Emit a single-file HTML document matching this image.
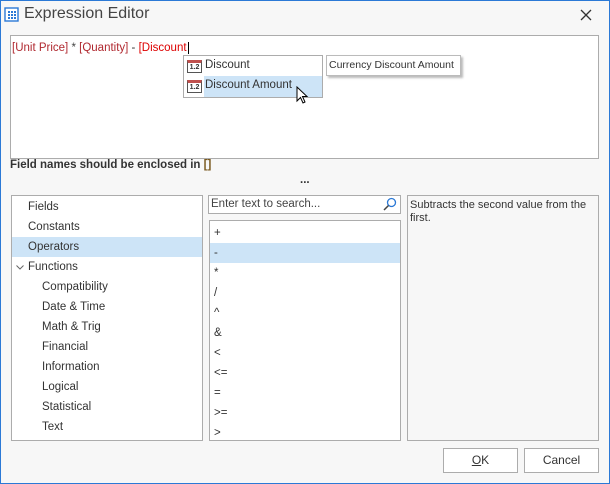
<!DOCTYPE html>
<html><head><style>
*{margin:0;padding:0;box-sizing:border-box}
body{width:610px;height:484px;background:#f7f7f7;font-family:"Liberation Sans",sans-serif;font-size:11.5px;color:#333;position:relative;overflow:hidden}
.a{position:absolute}
.box{position:absolute;background:#fff;border:1px solid #acacac}
.it{position:absolute;left:0;right:0;height:20px;line-height:20px}
.sel{background:#cde4f7}
.btn{position:absolute;background:#fff;border:1px solid #acacac;text-align:center;line-height:23px;font-size:12px}
.ic{position:absolute;width:15px;height:13px;border:1px solid #555;border-top:3px solid #c0504d;font-size:7px;line-height:9px;text-align:center;font-weight:bold;background:#fff}
</style></head><body>
<div class="a" style="left:0;top:0;width:610px;height:484px;border:1px solid #2b79d6"></div>
<svg class="a" style="left:4px;top:7px" width="15" height="15"><rect x="1" y="1" width="13" height="13" fill="#fff" stroke="#2b79d6" stroke-width="1.4"/><g fill="#2b79d6"><rect x="4" y="4" width="2" height="2"/><rect x="7" y="4" width="2" height="2"/><rect x="10" y="4" width="2" height="2"/><rect x="4" y="7" width="2" height="2"/><rect x="7" y="7" width="2" height="2"/><rect x="10" y="7" width="2" height="2"/><rect x="4" y="10" width="2" height="2"/><rect x="7" y="10" width="2" height="2"/><rect x="10" y="10" width="2" height="2"/></g></svg>
<div class="a" style="left:24px;top:5px;font-size:16px;color:#444">Expression Editor</div>
<svg class="a" style="left:580px;top:9px" width="12" height="12"><path d="M1 1L11 11M11 1L1 11" stroke="#333" stroke-width="1.3"/></svg>
<div class="box" style="left:10px;top:35px;width:589px;height:124px"></div>
<div class="a" style="left:12px;top:42px;font-size:11.5px"><span style="color:#b0282f">[Unit Price]</span> <span style="color:#444">*</span> <span style="color:#b0282f">[Quantity]</span> - <span style="color:#d00">[Discount</span><span style="border-left:1px solid #000;margin-left:1px"></span></div>
<div class="a" style="left:183px;top:55px;width:140px;height:43px;background:#fff;border:1px solid #acacac">
<div class="ic" style="left:3px;top:4px">1.2</div><div class="a" style="left:21px;top:3px">Discount</div>
<div class="a sel" style="left:20px;top:20px;width:118px;height:21px"></div>
<div class="ic" style="left:3px;top:24px">1.2</div><div class="a" style="left:21px;top:23px">Discount Amount</div>
</div>
<svg class="a" style="left:296px;top:86px" width="14" height="20"><path d="M1 1L1 15L4.5 11.5L7 17L9 16L6.5 10.5L11 10.5Z" fill="#fff" stroke="#000"/></svg>
<div class="a" style="left:326px;top:55px;width:135px;height:21px;background:#fff;border:1px solid #bbb;box-shadow:2px 2px 2px #bbb;padding:3px 2px;font-size:10.5px;white-space:nowrap;overflow:hidden">Currency Discount Amount</div>
<div class="a" style="left:10px;top:159px;font-weight:bold;font-size:11.5px;color:#333">Field names should be enclosed in <span style="color:#7a5a20">[]</span></div>
<div class="a" style="left:300px;top:174px;font-weight:bold">...</div>
<div class="box" style="left:11px;top:195px;width:192px;height:246px">
<div class="it" style="top:1px;padding-left:16px">Fields</div>
<div class="it" style="top:21px;padding-left:16px">Constants</div>
<div class="it sel" style="top:41px;padding-left:16px">Operators</div>
<div class="it" style="top:61px;padding-left:16px">Functions</div>
<svg class="a" style="left:4px;top:69px" width="8" height="6"><path d="M0.5 0.5L4 4L7.5 0.5" stroke="#666" fill="none"/></svg>
<div class="it" style="top:81px;padding-left:30px">Compatibility</div>
<div class="it" style="top:101px;padding-left:30px">Date &amp; Time</div>
<div class="it" style="top:121px;padding-left:30px">Math &amp; Trig</div>
<div class="it" style="top:141px;padding-left:30px">Financial</div>
<div class="it" style="top:161px;padding-left:30px">Information</div>
<div class="it" style="top:181px;padding-left:30px">Logical</div>
<div class="it" style="top:201px;padding-left:30px">Statistical</div>
<div class="it" style="top:221px;padding-left:30px">Text</div>
</div>
<div class="box" style="left:208px;top:195px;width:193px;height:19px;padding-left:2px;line-height:17px;color:#444">Enter text to search...</div>
<svg class="a" style="left:383px;top:197px" width="14" height="14"><circle cx="8.5" cy="5.5" r="4" fill="none" stroke="#2b79d6" stroke-width="1.3"/><path d="M5.5 8.5L1 13" stroke="#444" stroke-width="1.5"/></svg>
<div class="box" style="left:209px;top:220px;width:192px;height:221px">
<div class="it" style="top:2px;padding-left:4px">+</div>
<div class="it sel" style="top:22px;padding-left:4px">-</div>
<div class="it" style="top:42px;padding-left:4px">*</div>
<div class="it" style="top:62px;padding-left:4px">/</div>
<div class="it" style="top:82px;padding-left:4px">^</div>
<div class="it" style="top:102px;padding-left:4px">&amp;</div>
<div class="it" style="top:122px;padding-left:4px">&lt;</div>
<div class="it" style="top:142px;padding-left:4px">&lt;=</div>
<div class="it" style="top:162px;padding-left:4px">=</div>
<div class="it" style="top:182px;padding-left:4px">&gt;=</div>
<div class="it" style="top:202px;padding-left:4px">&gt;</div>
</div>
<div class="box" style="left:407px;top:195px;width:192px;height:246px;background:#f7f7f7;padding:3px 2px;font-size:11px;line-height:13px">Subtracts the second value from the first.</div>
<div class="btn" style="left:443px;top:448px;width:75px;height:25px"><u>O</u>K</div>
<div class="btn" style="left:524px;top:448px;width:75px;height:25px">Cancel</div>
</body></html>
